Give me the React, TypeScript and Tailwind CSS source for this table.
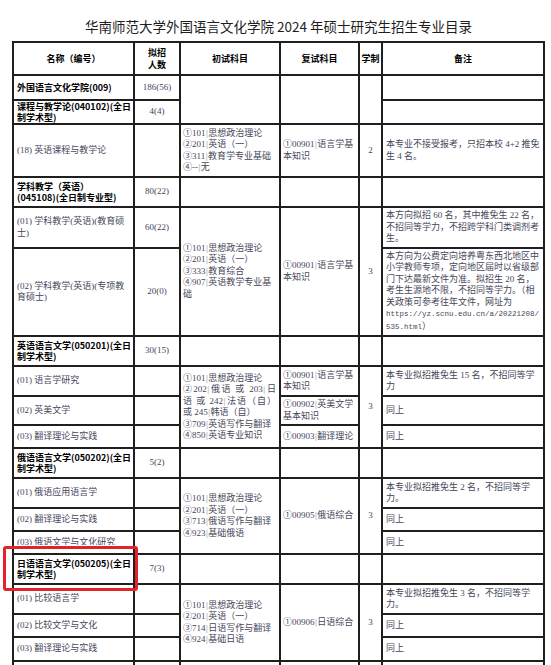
import type { ReactNode } from "react";

type CellProps = {
  className?: string;
  children?: ReactNode;
};

function Cell({ className = "", children }: CellProps) {
  return (
    <div className={`flex flex-col justify-center bg-white ${className}`}>
      {children}
    </div>
  );
}

// bold sans headings (group titles, header row)
function Group({ lines }: { lines: string[] }) {
  return (
    <Cell className="px-[3px] font-bold text-black [font-family:'Noto_Sans_CJK_SC',sans-serif]">
      {lines.map((line) => (
        <div key={line} className="whitespace-nowrap">
          {line}
        </div>
      ))}
    </Cell>
  );
}

function Head({ lines }: { lines: string[] }) {
  return (
    <Cell className="items-center font-bold text-black [font-family:'Noto_Sans_CJK_SC',sans-serif]">
      {lines.map((line) => (
        <div key={line} className="whitespace-nowrap">
          {line}
        </div>
      ))}
    </Cell>
  );
}

function Text({ lines, className = "" }: { lines: ReactNode[]; className?: string }) {
  return (
    <Cell className={`px-[3px] ${className}`}>
      {lines.map((line, i) => (
        <div key={i} className="whitespace-nowrap">
          {line}
        </div>
      ))}
    </Cell>
  );
}

function Count({ value }: { value?: string }) {
  return <Cell className="items-center">{value}</Cell>;
}

function Bar() {
  return <span className="px-[0.5px] text-[#8c8c8c]">|</span>;
}

function Subject({ n, code, name }: { n: string; code: string; name: string }) {
  return (
    <>
      {n}
      {code}
      <Bar />
      {name}
    </>
  );
}

function Mono({ children }: { children: ReactNode }) {
  return (
    <span className="text-[7.5px] [font-family:'Liberation_Mono',monospace]">{children}</span>
  );
}

export default function App() {
  return (
    <div className="relative h-[665px] w-[551px] overflow-hidden bg-white">
      <div className="ml-[12px] w-[533px] pt-[17px] text-center text-[13.5px] leading-[18px] text-[#1e1e1e] [font-family:'Noto_Sans_CJK_SC',sans-serif]">
        华南师范大学外国语言文化学院 2024 年硕士研究生招生专业目录
      </div>

      <div className="ml-[12px] mt-[6px] grid w-[533px] grid-cols-[119px_44px_98px_77px_21px_160px] grid-rows-[31px_23px_22px_51px_28px_39px_86px_28px_28px_27px_21px_28px_28px_21px_21px_28px_28px_21px_22px_30px] gap-[2px] bg-[#1f1f1f] p-[2px] text-[9px] leading-[11.5px] text-[#46465a] [font-family:'Liberation_Serif','Noto_Sans_CJK_SC',serif]">
        {/* header */}
        <Head lines={["名称（编号）"]} />
        <Head lines={["拟招", "人数"]} />
        <Head lines={["初试科目"]} />
        <Head lines={["复试科目"]} />
        <Head lines={["学制"]} />
        <Head lines={["备注"]} />

        {/* 外国语言文化学院 */}
        <Group lines={["外国语言文化学院(009)"]} />
        <Count value="186(56)" />
        <Cell className="row-span-2" />
        <Cell className="row-span-2" />
        <Cell className="row-span-2" />
        <Cell />

        <Group lines={["课程与教学论(040102)(全日", "制学术型)"]} />
        <Count value="4(4)" />
        <Cell />

        <Text lines={["(18) 英语课程与教学论"]} />
        <Count />
        <Text
          className="pl-[2px]"
          lines={[
            <Subject n="①" code="101" name="思想政治理论" />,
            <Subject n="②" code="201" name="英语（一）" />,
            <Subject n="③" code="311" name="教育学专业基础" />,
            <Subject n="④" code="--" name="无" />,
          ]}
        />
        <Text
          className="pl-[2px]"
          lines={[<Subject n="①" code="00901" name="语言学基" />, "本知识"]}
        />
        <Count value="2" />
        <Text lines={["本专业不接受报考，只招本校 4+2 推免", "生 4 名。"]} />

        {/* 学科教学（英语） */}
        <Group lines={["学科教学（英语）", "(045108)(全日制专业型)"]} />
        <Count value="80(22)" />
        <Cell />
        <Cell />
        <Cell />
        <Cell />

        <Text lines={["(01) 学科教学(英语)(教育硕", "士)"]} />
        <Count value="60(22)" />
        <Text
          className="row-span-2 pl-[2px]"
          lines={[
            <Subject n="①" code="101" name="思想政治理论" />,
            <Subject n="②" code="201" name="英语（一）" />,
            <Subject n="③" code="333" name="教育综合" />,
            <Subject n="④" code="907" name="英语教学专业基" />,
            "础",
          ]}
        />
        <Text
          className="row-span-2 pl-[2px]"
          lines={[<Subject n="①" code="00901" name="语言学基" />, "本知识"]}
        />
        <Cell className="row-span-2 items-center">3</Cell>
        <Text
          lines={[
            "本方向拟招 60 名，其中推免生 22 名，",
            "不招同等学力，不招跨学科门类调剂考",
            "生。",
          ]}
        />

        <Text lines={["(02) 学科教学(英语)(专项教", "育硕士)"]} />
        <Count value="20(0)" />
        <Text
          lines={[
            "本方向为公费定向培养粤东西北地区中",
            "小学教师专项，定向地区届时以省级部",
            "门下达最新文件为准。拟招生 20 名，",
            "考生生源地不限，不招同等学力。（相",
            "关政策可参考往年文件，网址为",
            <Mono>https://yz.scnu.edu.cn/a/20221208/</Mono>,
            <>
              <Mono>535.html</Mono>）
            </>,
          ]}
        />

        {/* 英语语言文学 */}
        <Group lines={["英语语言文学(050201)(全日", "制学术型)"]} />
        <Count value="30(15)" />
        <Cell />
        <Cell />
        <Cell />
        <Cell />

        <Text lines={["(01) 语言学研究"]} />
        <Count />
        <Cell className="row-span-3 pl-[2px] pr-[3px]">
          <div className="whitespace-nowrap">
            <Subject n="①" code="101" name="思想政治理论" />
          </div>
          <div className="whitespace-nowrap text-justify [text-align-last:justify]">
            ②202<Bar />俄语 或 203<Bar />日
          </div>
          <div className="whitespace-nowrap text-justify [text-align-last:justify]">
            语 或 242<Bar />法语（自）
          </div>
          <div className="whitespace-nowrap">
            或 245<Bar />韩语（自）
          </div>
          <div className="whitespace-nowrap">
            <Subject n="③" code="709" name="英语写作与翻译" />
          </div>
          <div className="whitespace-nowrap">
            <Subject n="④" code="850" name="英语专业知识" />
          </div>
        </Cell>
        <Text
          className="pl-[2px]"
          lines={[<Subject n="①" code="00901" name="语言学基" />, "本知识"]}
        />
        <Cell className="row-span-3 items-center">3</Cell>
        <Text lines={["本专业拟招推免生 15 名，不招同等学", "力"]} />

        <Text lines={["(02) 英美文学"]} />
        <Count />
        <Text
          className="pl-[2px]"
          lines={[<Subject n="①" code="00902" name="英美文学" />, "基本知识"]}
        />
        <Text lines={["同上"]} />

        <Text lines={["(03) 翻译理论与实践"]} />
        <Count />
        <Text className="pl-[2px]" lines={[<Subject n="①" code="00903" name="翻译理论" />]} />
        <Text lines={["同上"]} />

        {/* 俄语语言文学 */}
        <Group lines={["俄语语言文学(050202)(全日", "制学术型)"]} />
        <Count value="5(2)" />
        <Cell />
        <Cell />
        <Cell />
        <Cell />

        <Text lines={["(01) 俄语应用语言学"]} />
        <Count />
        <Text
          className="row-span-3 pl-[2px]"
          lines={[
            <Subject n="①" code="101" name="思想政治理论" />,
            <Subject n="②" code="201" name="英语（一）" />,
            <Subject n="③" code="713" name="俄语写作与翻译" />,
            <Subject n="④" code="923" name="基础俄语" />,
          ]}
        />
        <Text
          className="row-span-3 pl-[2px]"
          lines={[<Subject n="①" code="00905" name="俄语综合" />]}
        />
        <Cell className="row-span-3 items-center">3</Cell>
        <Text lines={["本专业拟招推免生 2 名，不招同等学", "力。"]} />

        <Text lines={["(02) 翻译理论与实践"]} />
        <Count />
        <Text lines={["同上"]} />

        {/* row text runs over the cell edge in the source, so it is cut */}
        <Cell className="justify-start px-[3px] pt-[4px]">
          <div className="h-[9px] overflow-hidden whitespace-nowrap leading-[13px]">
            (03) 俄语文学与文化研究
          </div>
        </Cell>
        <Count />
        <Text lines={["同上"]} />

        {/* 日语语言文学 */}
        <Group lines={["日语语言文学(050205)(全日", "制学术型)"]} />
        <Count value="7(3)" />
        <Cell />
        <Cell />
        <Cell />
        <Cell />

        <Text lines={["(01) 比较语言学"]} />
        <Count />
        <Text
          className="row-span-3 pl-[2px]"
          lines={[
            <Subject n="①" code="101" name="思想政治理论" />,
            <Subject n="②" code="201" name="英语（一）" />,
            <Subject n="③" code="714" name="日语写作与翻译" />,
            <Subject n="④" code="924" name="基础日语" />,
          ]}
        />
        <Text
          className="row-span-3 pl-[2px]"
          lines={[<Subject n="①" code="00906" name="日语综合" />]}
        />
        <Cell className="row-span-3 items-center">3</Cell>
        <Text lines={["本专业拟招推免生 3 名，不招同等学", "力。"]} />

        <Text lines={["(02) 比较文学与文化"]} />
        <Count />
        <Text lines={["同上"]} />

        <Text lines={["(03) 翻译理论与实践"]} />
        <Count />
        <Text lines={["同上"]} />

        <Group lines={["外国语言学及应用语言学", "(050211)(全日制学术型)"]} />
        <Count value="7(2)" />
        <Cell />
        <Cell />
        <Cell />
        <Cell />
      </div>

      {/* red highlight round the Japanese row */}
      <div className="absolute left-[3px] top-[546px] h-[45px] w-[135px] rounded-[3px] border-[3px] border-[#e3232a]" />
    </div>
  );
}
